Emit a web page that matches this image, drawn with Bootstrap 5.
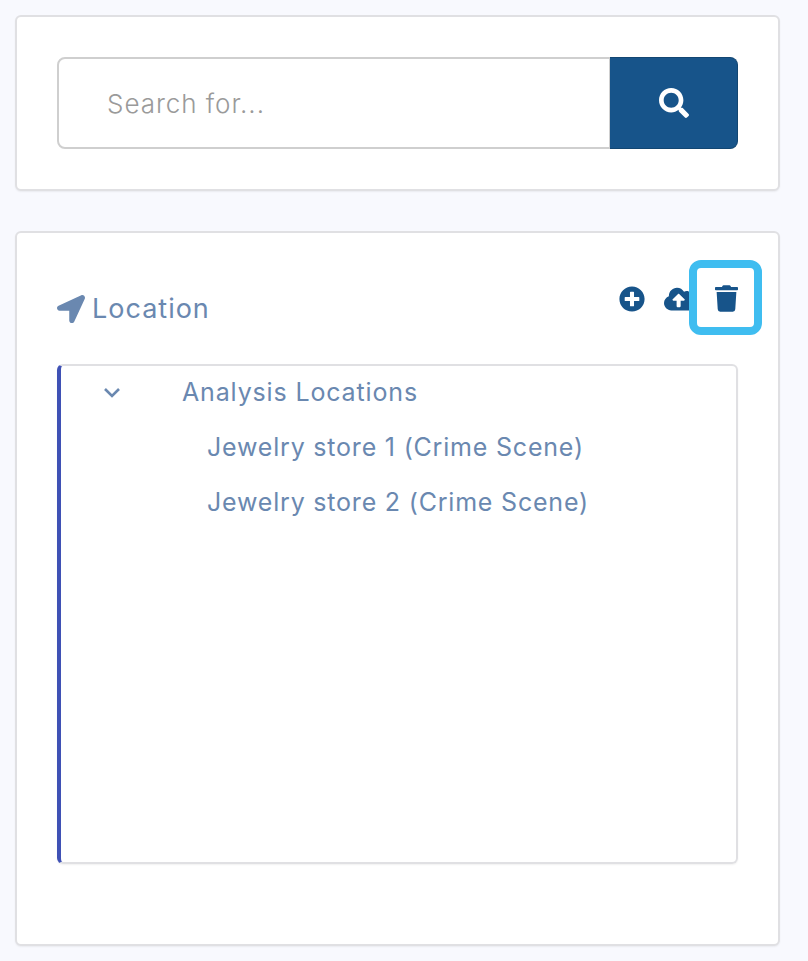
<!DOCTYPE html>
<html lang="en">
<head>
    <meta charset="UTF-8">
    <title>Location</title>
    <link href="https://cdn.jsdelivr.net/npm/bootstrap@5.3.3/dist/css/bootstrap.min.css" rel="stylesheet">
    <style>
        body { background: #f8f9fe; font-family: Inter, "Noto Sans", sans-serif; padding: 15px 28px 15px 15px; }
        .panel-box { border: 2px solid #e0e0e3; border-radius: 6px; background: #fff; padding: 40px; box-shadow: 0 1px 2px rgba(0, 0, 0, .06); }
        .search-panel { height: 176px; margin-bottom: 40px; }
        .loc-panel { height: 715px; }
        .search-box { height: 92px; }
        .search-box .form-control { border: 2px solid #cfcfcf; border-radius: 8px 0 0 8px; padding: 0 48px; font-size: 26px; letter-spacing: .95px; font-weight: 300; color: #6a88b0; }
        .search-box .form-control::placeholder { color: #9a9a9a; opacity: 1; }
        .search-btn { width: 128px; background: #17548a; border: 1px solid #124672; border-left: 0; border-radius: 0 8px 8px 0; }
        .search-btn:hover { background: #17548a; }
        .search-btn svg { width: 30px; height: 30px; fill: #fff; }
        .loc-head { height: 91px; position: relative; padding-top: 20px; }
        .loc-title { color: #6a88b0; font-size: 27px; line-height: 32px; letter-spacing: 1px; }
        .loc-title svg { width: 28px; height: 28px; fill: #6a88b0; margin-right: 7px; }
        .tool-icons { gap: 19px; margin-top: -7px; }
        .tool-icons svg { height: 26px; fill: #17548a; display: block; }
        .focus-mark { position: absolute; left: 632px; top: -13px; width: 73px; height: 75px; border: 8px solid #3fbdf0; border-radius: 12px; background: #fff; display: flex; align-items: center; justify-content: center; }
        .focus-mark svg { height: 27px; width: 23px; fill: #17548a; margin: 1px 0 0 2px; }
        .tree-box { height: 500px; border: 2px solid #e0e0e3; border-left: 4px solid #3f51b5; border-radius: 6px; color: #6a88b0; font-size: 25px; letter-spacing: .85px; box-shadow: 0 1px 2px rgba(0, 0, 0, .06); }
        .tree-row { height: 55px; padding-bottom: 2px; }
        .tree-row svg { width: 18px; height: 12px; margin-left: 42px; margin-right: 61px; stroke: #6a88b0; stroke-width: 2.6; fill: none; }
        .tree-leaf { padding-left: 146px; letter-spacing: .8px; }
    </style>
</head>
<body>
<div class="panel-box search-panel">
    <div class="input-group search-box">
        <input type="text" class="form-control" placeholder="Search for...">
        <button class="btn search-btn d-flex align-items-center justify-content-center" type="button">
            <svg viewBox="0 0 512 512"><path d="M505 442.7L405.3 343c-4.5-4.5-10.6-7-17-7H372c27.6-35.3 44-79.7 44-128C416 93.1 322.9 0 208 0S0 93.1 0 208s93.1 208 208 208c48.3 0 92.7-16.4 128-44v16.3c0 6.4 2.5 12.5 7 17l99.7 99.7c9.4 9.4 24.6 9.4 33.9 0l28.3-28.3c9.4-9.4 9.4-24.6.1-34zM208 336c-70.7 0-128-57.2-128-128 0-70.7 57.2-128 128-128 70.7 0 128 57.2 128 128 0 70.7-57.2 128-128 128z"/></svg>
        </button>
    </div>
</div>

<div class="panel-box loc-panel">
    <div class="loc-head d-flex justify-content-between align-items-start">
        <div class="loc-title d-flex align-items-center">
            <svg viewBox="0 0 512 512"><path d="M444.52 3.52L28.74 195.42c-47.97 22.39-31.98 92.75 19.19 92.75h175.91v175.91c0 51.17 70.36 67.17 92.75 19.19l191.9-415.78c15.99-38.39-25.59-79.97-63.97-63.97z"/></svg>
            <span>Location</span>
        </div>
        <div class="tool-icons d-flex">
            <svg viewBox="0 0 512 512"><path d="M256 8C119 8 8 119 8 256s111 248 248 248 248-111 248-248S393 8 256 8zm144 276c0 6.6-5.4 12-12 12h-92v92c0 6.6-5.4 12-12 12h-56c-6.6 0-12-5.4-12-12v-92h-92c-6.6 0-12-5.4-12-12v-56c0-6.6 5.4-12 12-12h92v-92c0-6.6 5.4-12 12-12h56c6.6 0 12 5.4 12 12v92h92c6.6 0 12 5.4 12 12v56z"/></svg>
            <svg viewBox="0 0 640 512"><path d="M537.6 226.6c4.1-10.7 6.4-22.4 6.4-34.6 0-53-43-96-96-96-19.7 0-38.1 6-53.3 16.2C367 64.2 315.3 32 256 32c-88.4 0-160 71.6-160 160 0 2.7.1 5.4.2 8.1C40.2 219.8 0 273.2 0 336c0 79.5 64.5 144 144 144h368c70.7 0 128-57.3 128-128 0-61.9-44-113.6-102.4-125.4zM393.4 288H328v112c0 8.8-7.2 16-16 16h-48c-8.8 0-16-7.2-16-16V288h-65.4c-14.3 0-21.4-17.2-11.3-27.3l105.4-105.4c6.2-6.2 16.4-6.2 22.6 0l105.4 105.4c10.1 10.1 2.9 27.3-11.3 27.3z"/></svg>
            <svg viewBox="0 0 448 512"><path d="M432 32H312l-9.4-18.7A24 24 0 0 0 281.1 0H166.8a23.72 23.72 0 0 0-21.4 13.3L136 32H16A16 16 0 0 0 0 48v32a16 16 0 0 0 16 16h416a16 16 0 0 0 16-16V48a16 16 0 0 0-16-16zM53.2 467a48 48 0 0 0 47.9 45h245.8a48 48 0 0 0 47.9-45L416 128H32z"/></svg>
        </div>
        <div class="focus-mark">
            <svg viewBox="0 0 448 512"><path d="M432 32H312l-9.4-18.7A24 24 0 0 0 281.1 0H166.8a23.72 23.72 0 0 0-21.4 13.3L136 32H16A16 16 0 0 0 0 48v32a16 16 0 0 0 16 16h416a16 16 0 0 0 16-16V48a16 16 0 0 0-16-16zM53.2 467a48 48 0 0 0 47.9 45h245.8a48 48 0 0 0 47.9-45L416 128H32z"/></svg>
        </div>
    </div>

    <!-- location tree -->
    <div class="tree-box">
        <div class="tree-row d-flex align-items-center">
            <svg viewBox="0 0 18 12"><polyline points="2,2 9,9 16,2"/></svg>
            <span>Analysis Locations</span>
        </div>
        <div class="tree-row tree-leaf d-flex align-items-center">Jewelry store 1 (Crime Scene)</div>
        <div class="tree-row tree-leaf d-flex align-items-center">Jewelry store 2 (Crime Scene)</div>
    </div>
</div>
<script src="https://cdn.jsdelivr.net/npm/bootstrap@5.3.3/dist/js/bootstrap.bundle.min.js"></script>
</body>
</html>
